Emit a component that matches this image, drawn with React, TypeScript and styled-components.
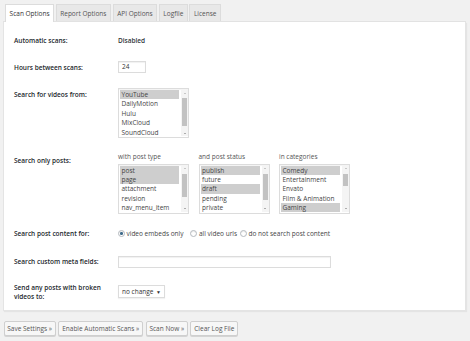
import React from 'react';
import styled, { createGlobalStyle } from 'styled-components';

const Global = createGlobalStyle`
  html, body { margin: 0; padding: 0; background: #f1f1f1; }
  body {
    font-family: "Open Sans", "Liberation Sans", sans-serif;
    font-size: 6.5px;
    color: #444;
  }
  * { box-sizing: border-box; }
`;

const Page = styled.div`
  width: 470px;
  height: 341px;
  padding: 4px 4px 0 3px;
  display: flex;
  flex-direction: column;
`;

const TabBar = styled.div`
  display: flex;
  align-items: flex-end;
  gap: 1.5px;
  height: 18px;
  padding-left: 2px;
  border-bottom: 1px solid #e2e2e2;
`;

const Tab = styled.div<{ $active?: boolean }>`
  height: ${(p) => (p.$active ? 18 : 17)}px;
  margin-bottom: ${(p) => (p.$active ? -1 : 0)}px;
  padding: 0 3.6px;
  display: flex;
  align-items: center;
  font-size: 6.5px;
  border: 1px solid #dcdcdc;
  border-bottom: none;
  background: ${(p) => (p.$active ? '#fff' : '#e8e8e8')};
  color: ${(p) => (p.$active ? '#333' : '#555')};
`;

const Panel = styled.div`
  background: #fff;
  border: 1px solid #e4e4e4;
  border-top: none;
  box-shadow: 1px 1px 1px rgba(0, 0, 0, 0.05);
  height: 289px;
  padding: 13px 10px 0 10px;
  display: flex;
  flex-direction: column;
`;

const Row = styled.div<{ $center?: boolean; $mt: number }>`
  display: flex;
  align-items: ${(p) => (p.$center ? 'center' : 'flex-start')};
  margin-top: ${(p) => p.$mt}px;
`;

const Label = styled.div<{ $pt?: number }>`
  width: 104px;
  flex: none;
  font-weight: 600;
  color: #23282d;
  line-height: 9px;
  padding-top: ${(p) => p.$pt ?? 0}px;
`;

const Value = styled.div`
  font-weight: 600;
  color: #32373c;
  line-height: 11px;
`;

const TextInput = styled.div<{ $w: number }>`
  width: ${(p) => p.$w}px;
  height: 12px;
  border: 1px solid #dcdcdc;
  box-shadow: inset 0 1px 1px rgba(0, 0, 0, 0.06);
  background: #fff;
  padding-left: 3px;
  line-height: 10px;
  color: #333;
`;

const ListBox = styled.div`
  width: 71px;
  height: 50px;
  border: 1px solid #dcdcdc;
  box-shadow: inset 0 1px 1px rgba(0, 0, 0, 0.05);
  background: #fff;
  display: flex;
  padding: 1px 0 1px 1px;
`;

const Items = styled.div`
  flex: 1;
  overflow: hidden;
`;

const Item = styled.div<{ $sel?: boolean }>`
  height: 9.4px;
  line-height: 9.4px;
  padding-left: 1.5px;
  white-space: nowrap;
  color: #444;
  background: ${(p) => (p.$sel ? '#cecece' : 'transparent')};
`;

const Scroll = styled.div`
  width: 7px;
  margin-left: 2px;
  display: flex;
  flex-direction: column;
  background: #f4f4f4;
`;

const Arrow = styled.div<{ $down?: boolean }>`
  height: 6px;
  display: flex;
  align-items: center;
  justify-content: center;
  &::after {
    content: '';
    border-left: 1.5px solid transparent;
    border-right: 1.5px solid transparent;
    ${(p) =>
      p.$down ? 'border-top: 1.5px solid #666;' : 'border-bottom: 1.5px solid #999;'}
  }
`;

const Track = styled.div`
  flex: 1;
  position: relative;
`;

const Thumb = styled.div<{ $top: number; $h: number }>`
  position: absolute;
  left: 1px;
  right: 1px;
  top: ${(p) => p.$top}px;
  height: ${(p) => p.$h}px;
  background: #c2c2c2;
`;

const Columns = styled.div`
  display: flex;
  gap: 9.5px;
`;

const Column = styled.div`
  display: flex;
  flex-direction: column;
  gap: 2.5px;
`;

const ColHead = styled.div`
  line-height: 8px;
  color: #555;
`;

const Radios = styled.div`
  display: flex;
  align-items: center;
  line-height: 10px;
`;

const RadioOpt = styled.div<{ $mr: number }>`
  display: flex;
  align-items: center;
  gap: 1.5px;
  margin-right: ${(p) => p.$mr}px;
  color: #444;
`;

const Radio = styled.span<{ $on?: boolean }>`
  width: 7px;
  height: 7px;
  border-radius: 50%;
  border: 1px solid #b4b9be;
  box-shadow: inset 0 1px 1px rgba(0, 0, 0, 0.08);
  display: flex;
  align-items: center;
  justify-content: center;
  &::after {
    content: '';
    width: 2.5px;
    height: 2.5px;
    border-radius: 50%;
    background: ${(p) => (p.$on ? '#3d6a8a' : 'transparent')};
  }
`;

const Select = styled.div`
  width: 47px;
  height: 13px;
  border: 1px solid #dcdcdc;
  box-shadow: 0 1px 1px rgba(0, 0, 0, 0.05);
  background: #fff;
  display: flex;
  align-items: center;
  justify-content: space-between;
  padding: 0 3px 0 3px;
  color: #333;
`;

const Caret = styled.span`
  font-size: 5px;
  color: #333;
`;

const Buttons = styled.div`
  display: flex;
  gap: 2.5px;
  margin-top: 10px;
  padding-left: 0.5px;
`;

const Button = styled.div`
  height: 15px;
  padding: 0 2.8px;
  display: flex;
  align-items: center;
  border: 1px solid #cfcfcf;
  border-radius: 2px;
  background: #f7f7f7;
  box-shadow: 0 1px 0 #d4d4d4;
  color: #555;
  font-size: 6.5px;
  white-space: nowrap;
`;

type ListProps = { items: string[]; selected: number[]; top: number; h: number };

const List = ({ items, selected, top, h }: ListProps) => (
  <ListBox>
    <Items>
      {items.map((it, i) => (
        <Item key={it} $sel={selected.includes(i)}>
          {it}
        </Item>
      ))}
    </Items>
    <Scroll>
      <Arrow />
      <Track>
        <Thumb $top={top} $h={h} />
      </Track>
      <Arrow $down />
    </Scroll>
  </ListBox>
);

export default function App() {
  return (
    <Page>
      <Global />
      <TabBar>
        <Tab $active>Scan Options</Tab>
        <Tab>Report Options</Tab>
        <Tab>API Options</Tab>
        <Tab>Logfile</Tab>
        <Tab>License</Tab>
      </TabBar>
      <Panel>
        <Row $mt={0}>
          <Label $pt={1}>Automatic scans:</Label>
          <Value>Disabled</Value>
        </Row>
        <Row $mt={15} $center>
          <Label>Hours between scans:</Label>
          <TextInput $w={28}>24</TextInput>
        </Row>
        <Row $mt={15}>
          <Label $pt={2}>Search for videos from:</Label>
          <List
            items={['YouTube', 'DailyMotion', 'Hulu', 'MixCloud', 'SoundCloud']}
            selected={[0]}
            top={2}
            h={28}
          />
        </Row>
        <Row $mt={15}>
          <Label $pt={3}>Search only posts:</Label>
          <Columns>
            <Column>
              <ColHead>with post type</ColHead>
              <List
                items={['post', 'page', 'attachment', 'revision', 'nav_menu_item']}
                selected={[0, 1]}
                top={2}
                h={23}
              />
            </Column>
            <Column>
              <ColHead>and post status</ColHead>
              <List
                items={['publish', 'future', 'draft', 'pending', 'private']}
                selected={[0, 2]}
                top={2}
                h={26}
              />
            </Column>
            <Column>
              <ColHead>in categories</ColHead>
              <List
                items={['Comedy', 'Entertainment', 'Envato', 'Film & Animation', 'Gaming']}
                selected={[0, 4]}
                top={2}
                h={12}
              />
            </Column>
          </Columns>
        </Row>
        <Row $mt={15} $center>
          <Label>Search post content for:</Label>
          <Radios>
            <RadioOpt $mr={7}>
              <Radio $on />
              video embeds only
            </RadioOpt>
            <RadioOpt $mr={3}>
              <Radio />
              all video urls
            </RadioOpt>
            <RadioOpt $mr={0}>
              <Radio />
              do not search post content
            </RadioOpt>
          </Radios>
        </Row>
        <Row $mt={17} $center>
          <Label>Search custom meta fields:</Label>
          <TextInput $w={213} />
        </Row>
        <Row $mt={15} $center>
          <Label>
            Send any posts with broken
            <br />
            videos to:
          </Label>
          <Select>
            no change <Caret>▼</Caret>
          </Select>
        </Row>
      </Panel>
      <Buttons>
        <Button>Save Settings »</Button>
        <Button>Enable Automatic Scans »</Button>
        <Button>Scan Now »</Button>
        <Button>Clear Log File</Button>
      </Buttons>
    </Page>
  );
}
